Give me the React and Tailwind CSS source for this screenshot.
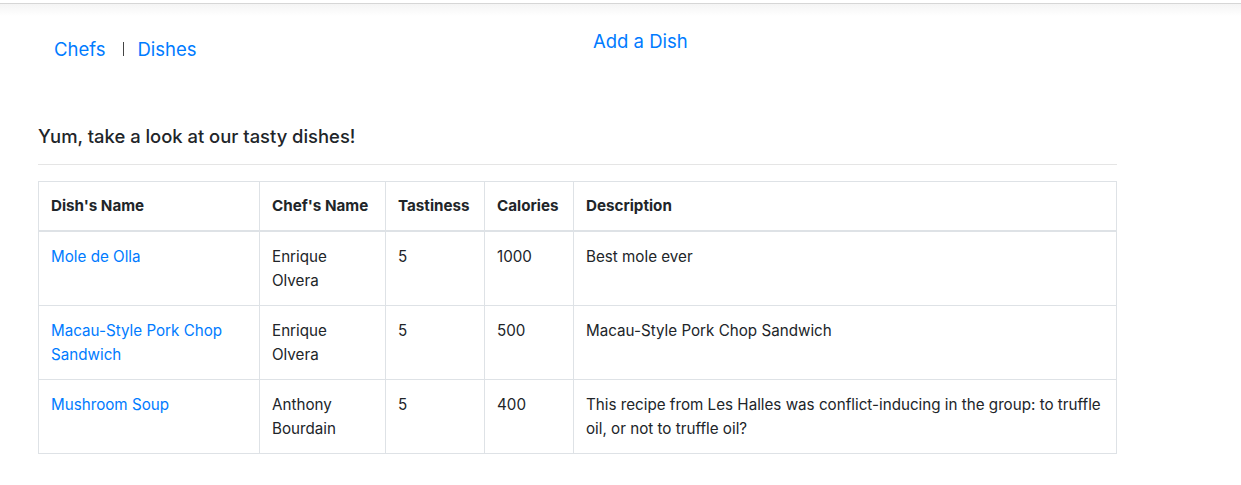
import React from "react";

const rows = [
  { dish: "Mole de Olla", chef: ["Enrique", "Olvera"], t: "5", c: "1000", d: "Best mole ever" },
  { dish: "Macau-Style Pork Chop Sandwich", chef: ["Enrique", "Olvera"], t: "5", c: "500", d: "Macau-Style Pork Chop Sandwich" },
  { dish: "Mushroom Soup", chef: ["Anthony", "Bourdain"], t: "5", c: "400", d: "This recipe from Les Halles was conflict-inducing in the group: to truffle oil, or not to truffle oil?" },
];

export default function App() {
  return (
    <div className="w-[1241px] h-[485px] bg-white text-[#212529] overflow-hidden" style={{ fontFamily: "Inter, 'Noto Sans', sans-serif" }}>
      <div className="h-[3px] bg-white" />
      <div className="h-[1px] bg-[#d6d6d6]" />
      <div className="h-[12px] bg-gradient-to-b from-[#f4f4f4] to-white" />
      <div className="relative h-[62px]">
        <div className="flex items-center pl-[54px] pt-[19px] text-[18.5px] leading-[28px]">
          <a className="text-[#007bff]">Chefs</a>
          <span className="ml-[16px] mr-[12px] w-[4px] flex justify-center">
            <span className="block w-[1px] h-[14px] bg-[#444]" />
          </span>
          <a className="text-[#007bff]">Dishes</a>
        </div>
        <a className="absolute left-[593px] top-[11px] text-[18.5px] leading-[28px] text-[#007bff]">Add a Dish</a>
      </div>
      <div className="ml-[38px] w-[1079px]">
        <h2 className="mt-[44px] text-[18.4px] leading-[28px] font-medium">Yum, take a look at our tasty dishes!</h2>
        <hr className="mt-[14px] border-0 border-t border-[#e5e5e5]" />
        <table className="mt-[16px] w-[1079px] border-collapse text-[15.2px] leading-[24px] table-fixed">
          <colgroup>
            <col className="w-[221px]" />
            <col className="w-[126px]" />
            <col className="w-[99px]" />
            <col className="w-[89px]" />
            <col />
          </colgroup>
          <thead>
            <tr>
              {["Dish's Name", "Chef's Name", "Tastiness", "Calories", "Description"].map((h) => (
                <th key={h} className="border border-[#dee2e6] border-b-2 px-[12px] py-[12px] text-left font-bold align-bottom whitespace-nowrap">{h}</th>
              ))}
            </tr>
          </thead>
          <tbody>
            {rows.map((r) => (
              <tr key={r.dish}>
                <td className="border border-[#dee2e6] px-[12px] py-[12.5px] align-top text-[#007bff]">{r.dish}</td>
                <td className="border border-[#dee2e6] px-[12px] py-[12.5px] align-top">{r.chef[0]}<br />{r.chef[1]}</td>
                <td className="border border-[#dee2e6] px-[12px] py-[12.5px] align-top">{r.t}</td>
                <td className="border border-[#dee2e6] px-[12px] py-[12.5px] align-top">{r.c}</td>
                <td className="border border-[#dee2e6] px-[12px] py-[12.5px] align-top">{r.d}</td>
              </tr>
            ))}
          </tbody>
        </table>
      </div>
    </div>
  );
}
